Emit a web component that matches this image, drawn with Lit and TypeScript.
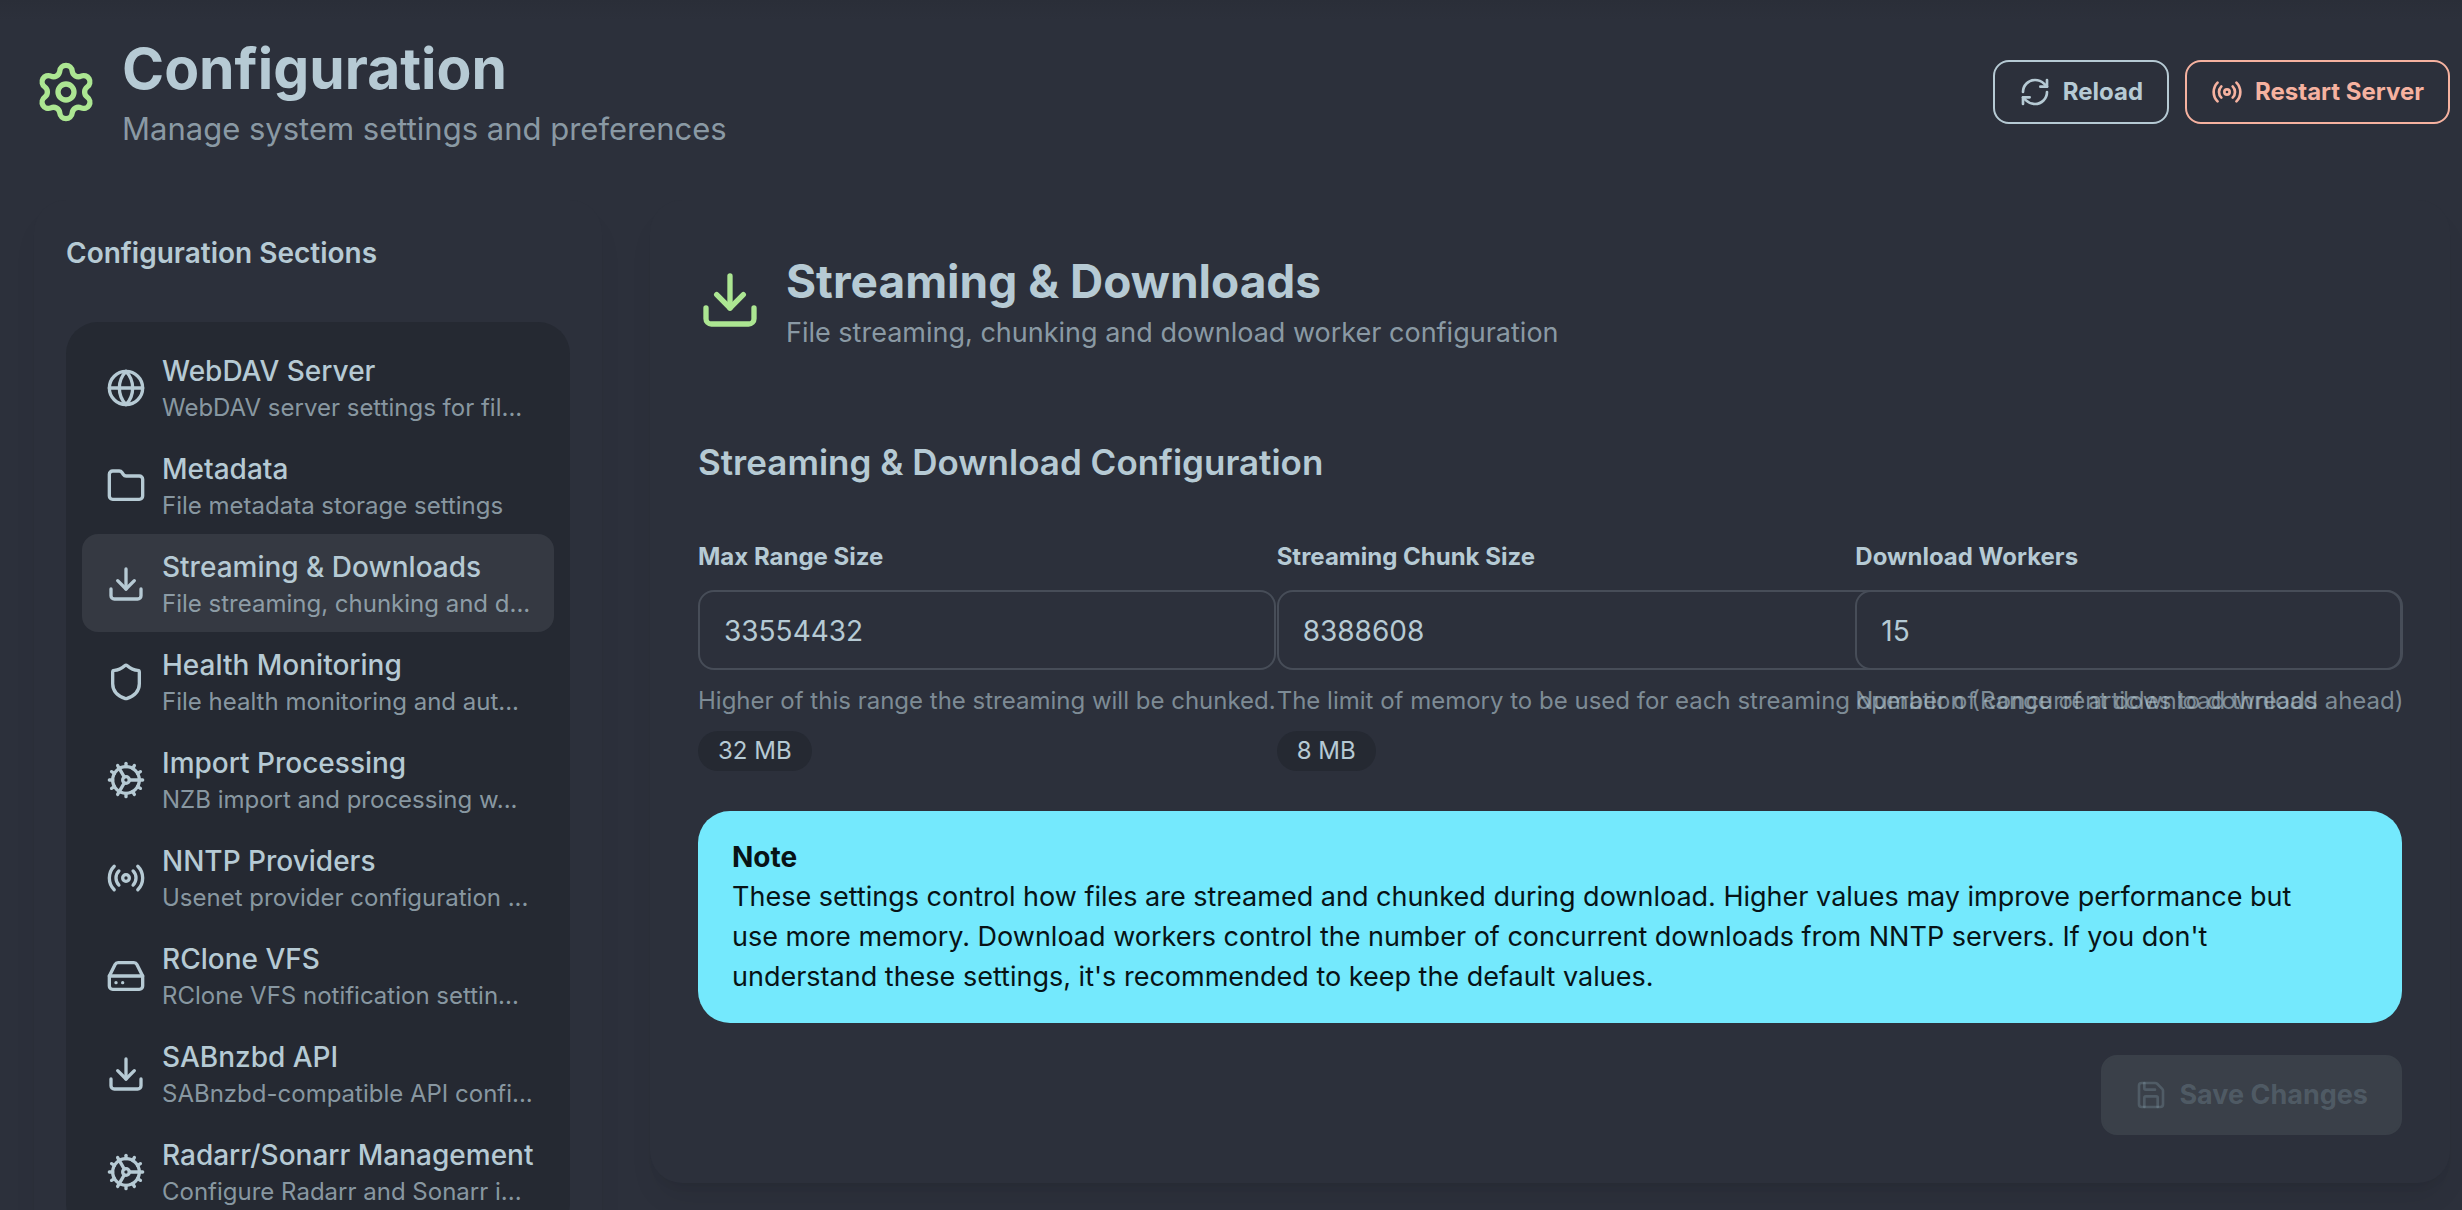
import { LitElement, html, css, svg } from "lit";
import { customElement, property, state } from "lit/decorators.js";
import { classMap } from "lit/directives/class-map.js";

const ICONS = {
  settings: svg`<path d="M9.671 4.136a2.34 2.34 0 0 1 4.659 0 2.34 2.34 0 0 0 3.319 1.915 2.34 2.34 0 0 1 2.33 4.033 2.34 2.34 0 0 0 0 3.831 2.34 2.34 0 0 1-2.33 4.033 2.34 2.34 0 0 0-3.319 1.915 2.34 2.34 0 0 1-4.659 0 2.34 2.34 0 0 0-3.32-1.915 2.34 2.34 0 0 1-2.33-4.033 2.34 2.34 0 0 0 0-3.831A2.34 2.34 0 0 1 6.35 6.051a2.34 2.34 0 0 0 3.319-1.915"/><circle cx="12" cy="12" r="3"/>`,
  refresh: svg`<path d="M3 12a9 9 0 0 1 9-9 9.75 9.75 0 0 1 6.74 2.74L21 8"/><path d="M21 3v5h-5"/><path d="M21 12a9 9 0 0 1-9 9 9.75 9.75 0 0 1-6.74-2.74L3 16"/><path d="M8 16H3v5"/>`,
  radio: svg`<path d="M16.247 7.761a6 6 0 0 1 0 8.478"/><path d="M19.075 4.933a10 10 0 0 1 0 14.134"/><path d="M4.925 19.067a10 10 0 0 1 0-14.134"/><path d="M7.753 16.239a6 6 0 0 1 0-8.478"/><circle cx="12" cy="12" r="2"/>`,
  globe: svg`<circle cx="12" cy="12" r="10"/><path d="M12 2a14.5 14.5 0 0 0 0 20 14.5 14.5 0 0 0 0-20"/><path d="M2 12h20"/>`,
  folder: svg`<path d="M20 20a2 2 0 0 0 2-2V8a2 2 0 0 0-2-2h-7.9a2 2 0 0 1-1.69-.9L9.6 3.9A2 2 0 0 0 7.93 3H4a2 2 0 0 0-2 2v13a2 2 0 0 0 2 2Z"/>`,
  download: svg`<path d="M12 15V3"/><path d="M21 15v4a2 2 0 0 1-2 2H5a2 2 0 0 1-2-2v-4"/><path d="m7 10 5 5 5-5"/>`,
  shield: svg`<path d="M20 13c0 5-3.5 7.5-7.66 8.95a1 1 0 0 1-.67-.01C7.5 20.5 4 18 4 13V6a1 1 0 0 1 1-1c2 0 4.5-1.2 6.24-2.72a1.17 1.17 0 0 1 1.52 0C14.51 3.81 17 5 19 5a1 1 0 0 1 1 1z"/>`,
  cog: svg`<path d="M12 20a8 8 0 1 0 0-16 8 8 0 0 0 0 16Z"/><path d="M12 14a2 2 0 1 0 0-4 2 2 0 0 0 0 4Z"/><path d="M12 2v2"/><path d="M12 22v-2"/><path d="m17 20.66-1-1.73"/><path d="M11 10.27 7 3.34"/><path d="m20.66 17-1.73-1"/><path d="m3.34 7 1.73 1"/><path d="M14 12h8"/><path d="M2 12h2"/><path d="m20.66 7-1.73 1"/><path d="m3.34 17 1.73-1"/><path d="m17 3.34-1 1.73"/><path d="m11 13.73-4 6.93"/>`,
  drive: svg`<path d="M22 12H2"/><path d="M5.45 5.11 2 12v6a2 2 0 0 0 2 2h16a2 2 0 0 0 2-2v-6l-3.45-6.89A2 2 0 0 0 16.76 4H7.24a2 2 0 0 0-1.79 1.11z"/><path d="M6 16h.01"/><path d="M10 16h.01"/>`,
  save: svg`<path d="M15.2 3a2 2 0 0 1 1.4.6l3.8 3.8a2 2 0 0 1 .6 1.4V19a2 2 0 0 1-2 2H5a2 2 0 0 1-2-2V5a2 2 0 0 1 2-2z"/><path d="M17 21v-7a1 1 0 0 0-1-1H8a1 1 0 0 0-1 1v7"/><path d="M7 3v4a1 1 0 0 0 1 1h7"/>`,
};

type IconName = keyof typeof ICONS;

@customElement("ui-icon")
class UiIcon extends LitElement {
  static styles = css`
    :host {
      display: inline-flex;
      flex: none;
      width: 40px;
      height: 40px;
    }
    .glyph {
      width: 100%;
      height: 100%;
      fill: none;
      stroke: currentColor;
      stroke-width: 2;
      stroke-linecap: round;
      stroke-linejoin: round;
    }
  `;

  @property() name: IconName = "settings";

  render() {
    return html`<svg class="glyph" viewBox="0 0 24 24" aria-hidden="true">${ICONS[this.name]}</svg>`;
  }
}

interface Section {
  id: string;
  icon: IconName;
  title: string;
  text: string;
}

const SECTIONS: Section[] = [
  { id: "webdav", icon: "globe", title: "WebDAV Server", text: "WebDAV server settings for fil..." },
  { id: "metadata", icon: "folder", title: "Metadata", text: "File metadata storage settings" },
  { id: "streaming", icon: "download", title: "Streaming & Downloads", text: "File streaming, chunking and d..." },
  { id: "health", icon: "shield", title: "Health Monitoring", text: "File health monitoring and aut..." },
  { id: "import", icon: "cog", title: "Import Processing", text: "NZB import and processing w..." },
  { id: "nntp", icon: "radio", title: "NNTP Providers", text: "Usenet provider configuration ..." },
  { id: "rclone", icon: "drive", title: "RClone VFS", text: "RClone VFS notification settin..." },
  { id: "sabnzbd", icon: "download", title: "SABnzbd API", text: "SABnzbd-compatible API confi..." },
  { id: "arrs", icon: "cog", title: "Radarr/Sonarr Management", text: "Configure Radarr and Sonarr i..." },
];

interface Field {
  id: string;
  label: string;
  value: string;
  hint: string;
  badge?: string;
}

const FIELDS: Field[] = [
  {
    id: "max-range",
    label: "Max Range Size",
    value: "33554432",
    hint: "Higher of this range the streaming will be chunked.",
    badge: "32 MB",
  },
  {
    id: "chunk-size",
    label: "Streaming Chunk Size",
    value: "8388608",
    hint: "The limit of memory to be used for each streaming operation (Range of articles to download ahead)",
    badge: "8 MB",
  },
  {
    id: "workers",
    label: "Download Workers",
    value: "15",
    hint: "Number of concurrent download threads",
  },
];

@customElement("app-root")
class AppRoot extends LitElement {
  static styles = css`
    :host {
      --base: #2c303b;
      --base-dark: #252932;
      --content: #b6cad4;
      --muted: rgba(182, 202, 212, 0.7);
      --faint: rgba(182, 202, 212, 0.6);
      --primary: #ace692;
      --error: #f6b2a0;
      --info: #74e9fd;
      display: block;
      box-sizing: border-box;
      height: 100vh;
      overflow-y: auto;
      scrollbar-width: none;
      background: var(--base);
      color: var(--content);
      font-family: Inter, "Liberation Sans", sans-serif;
      font-size: 28px;
      line-height: 40px;
    }
    *,
    *::before,
    *::after {
      box-sizing: border-box;
    }
    h1,
    h2,
    h3,
    p,
    ul {
      margin: 0;
      padding: 0;
    }
    .page {
      display: flex;
      flex-direction: column;
      gap: 48px;
      padding: 32px 12px 48px 34px;
      background: linear-gradient(#2a2e38, var(--base) 20px);
    }
    .top {
      display: flex;
      align-items: center;
      justify-content: space-between;
    }
    .heading {
      display: flex;
      align-items: center;
      gap: 24px;
    }
    .lead {
      width: 64px;
      height: 64px;
      color: var(--primary);
    }
    h1 {
      font-size: 57px;
      line-height: 74px;
      font-weight: 700;
    }
    .tagline {
      font-size: 31px;
      line-height: 46px;
      color: var(--muted);
    }
    .actions {
      display: flex;
      gap: 16px;
    }
    .btn {
      display: inline-flex;
      align-items: center;
      justify-content: center;
      gap: 12px;
      height: 64px;
      padding: 0 24px;
      border: 2px solid var(--content);
      border-radius: 16px;
      background: transparent;
      color: var(--content);
      font: inherit;
      font-size: 24px;
      font-weight: 700;
      cursor: pointer;
    }
    .btn ui-icon {
      width: 32px;
      height: 32px;
    }
    .btn-error {
      border-color: var(--error);
      color: var(--error);
    }
    .btn-save {
      height: 80px;
      padding: 0 32px;
      font-size: 27px;
    }
    .btn-save:disabled {
      border-color: #3a4049;
      background: #3a4049;
      color: rgba(172, 204, 218, 0.2);
      cursor: default;
    }
    .layout {
      display: grid;
      grid-template-columns: repeat(4, minmax(0, 1fr));
      column-gap: 48px;
      align-items: start;
    }
    .card {
      border-radius: 32px;
      background: var(--base);
      box-shadow:
        0 20px 30px -8px rgba(0, 0, 0, 0.08),
        0 8px 12px -8px rgba(0, 0, 0, 0.08);
    }
    .side {
      padding: 32px;
    }
    .side-title {
      font-size: 28px;
      line-height: 42px;
      font-weight: 600;
    }
    .menu {
      margin-top: 48px;
      padding: 16px;
      list-style: none;
      border-radius: 32px;
      background: var(--base-dark);
    }
    .item {
      display: flex;
      align-items: center;
      gap: 16px;
      width: 100%;
      padding: 13px 24px 11px;
      border: 0;
      border-radius: 16px;
      background: transparent;
      color: inherit;
      font: inherit;
      text-align: left;
      cursor: pointer;
    }
    .item.active {
      background: #353942;
    }
    .item-text {
      min-width: 0;
      white-space: nowrap;
    }
    .item-title {
      display: block;
      font-size: 28px;
      line-height: 40px;
      font-weight: 500;
    }
    .item-desc {
      display: block;
      font-size: 24px;
      line-height: 34px;
      color: var(--muted);
    }
    .main {
      grid-column: span 3;
      padding: 48px;
    }
    h2 {
      font-size: 46px;
      line-height: 66px;
      font-weight: 700;
    }
    .main-sub {
      font-size: 27px;
      line-height: 38px;
      color: var(--muted);
    }
    .form-title {
      margin-top: 82px;
      font-size: 35px;
      line-height: 56px;
      font-weight: 600;
    }
    .fields {
      display: grid;
      grid-template-columns: repeat(3, minmax(0, 1fr));
      gap: 32px;
      margin-top: 46px;
    }
    .field {
      display: flex;
      flex-direction: column;
      align-items: stretch;
      min-width: max-content;
      font-size: 24px;
    }
    .field label {
      font-weight: 700;
      line-height: 42px;
    }
    .input {
      width: 100%;
      height: 80px;
      margin-top: 12px;
      padding: 2px 24px 0;
      border: 2px solid #474d58;
      border-radius: 16px;
      background: var(--base);
      color: var(--content);
      font: inherit;
      font-size: 28px;
    }
    .hint {
      margin-top: 12px;
      line-height: 38px;
      white-space: nowrap;
      color: var(--faint);
    }
    .badge {
      align-self: flex-start;
      margin-top: 11px;
      height: 40px;
      padding: 0 20px;
      border-radius: 32px;
      background: var(--base-dark);
      line-height: 40px;
    }
    .note {
      margin-top: 40px;
      padding: 26px 88px 26px 34px;
      border-radius: 32px;
      background: var(--info);
      color: #071316;
      font-size: 27px;
    }
    .note-title {
      font-size: 28px;
      font-weight: 700;
    }
    .footer {
      display: flex;
      justify-content: flex-end;
      margin-top: 32px;
    }
  `;

  @state() private active = "streaming";

  private renderSection(s: Section) {
    const on = s.id === this.active;
    return html`<li>
      <button
        type="button"
        class=${classMap({ item: true, active: on })}
        aria-current=${on ? "page" : "false"}
        @click=${() => (this.active = s.id)}
      >
        <ui-icon name=${s.icon}></ui-icon>
        <span class="item-text">
          <span class="item-title">${s.title}</span>
          <span class="item-desc">${s.text}</span>
        </span>
      </button>
    </li>`;
  }

  private renderField(f: Field) {
    return html`<div class="field">
      <label for=${f.id}>${f.label}</label>
      <input class="input" id=${f.id} type="text" inputmode="numeric" .value=${f.value} />
      <p class="hint">${f.hint}</p>
      ${f.badge ? html`<span class="badge">${f.badge}</span>` : null}
    </div>`;
  }

  render() {
    return html`<div class="page">
      <header class="top">
        <div class="heading">
          <ui-icon class="lead" name="settings"></ui-icon>
          <div>
            <h1>Configuration</h1>
            <p class="tagline">Manage system settings and preferences</p>
          </div>
        </div>
        <div class="actions">
          <button type="button" class="btn"><ui-icon name="refresh"></ui-icon>Reload</button>
          <button type="button" class="btn btn-error"><ui-icon name="radio"></ui-icon>Restart Server</button>
        </div>
      </header>
      <div class="layout">
        <aside class="card side">
          <h3 class="side-title">Configuration Sections</h3>
          <nav>
            <ul class="menu">
              ${SECTIONS.map((s) => this.renderSection(s))}
            </ul>
          </nav>
        </aside>
        <main class="card main">
          <div class="heading">
            <ui-icon class="lead" name="download"></ui-icon>
            <div>
              <h2>Streaming &amp; Downloads</h2>
              <p class="main-sub">File streaming, chunking and download worker configuration</p>
            </div>
          </div>
          <h3 class="form-title">Streaming &amp; Download Configuration</h3>
          <div class="fields">${FIELDS.map((f) => this.renderField(f))}</div>
          <div class="note" role="note">
            <p class="note-title">Note</p>
            <p>
              These settings control how files are streamed and chunked during download. Higher values may improve
              performance but use more memory. Download workers control the number of concurrent downloads from NNTP
              servers. If you don't understand these settings, it's recommended to keep the default values.
            </p>
          </div>
          <div class="footer">
            <button type="button" class="btn btn-save" disabled><ui-icon name="save"></ui-icon>Save Changes</button>
          </div>
        </main>
      </div>
    </div>`;
  }
}
